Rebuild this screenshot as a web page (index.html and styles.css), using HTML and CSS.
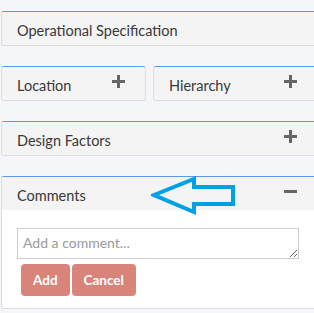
FILE: index.html
```html
<!DOCTYPE html>
<html lang="en">
<head>
    <meta charset="UTF-8">
    <title>Specification</title>
    <link rel="stylesheet" href="styles.css">
</head>
<body>
    <div class="page">
        <div class="panel">
            <div class="panel-heading">Operational Specification</div>
        </div>

        <div class="panel-row">
            <div class="panel">
                <div class="panel-heading">Location <span class="icon plus"></span></div>
            </div>
            <div class="panel">
                <div class="panel-heading">Hierarchy <span class="icon plus"></span></div>
            </div>
        </div>

        <div class="panel">
            <div class="panel-heading">Design Factors <span class="icon plus"></span></div>
        </div>

        <div class="panel comments">
            <div class="panel-heading">Comments <span class="icon minus"></span></div>
            <div class="panel-body">
                <textarea placeholder="Add a comment..."></textarea>
                <div class="actions">
                    <button>Add</button>
                    <button>Cancel</button>
                </div>
            </div>
            <svg class="pointer" width="90" height="42" viewBox="0 0 90 42">
                <polygon points="3,19 43,3 43,11 82,11 82,28 43,28 43,36" fill="none" stroke="#00a0e6" stroke-width="4" stroke-linejoin="miter"/>
            </svg>
        </div>
    </div>
</body>
</html>
```

FILE: styles.css
```css
body {
    margin: 0;
    background-color: #f5f6fa;
    font-family: Lato, "Liberation Sans", sans-serif;
    color: #383838;
    overflow: hidden;
}

.page {
    width: 317px;
    margin: 11px 0 0 1px;
}

.panel {
    position: relative;
    border: 1px solid #dddddd;
    border-top: 1px solid #5b9be6;
    border-radius: 3px;
    margin-bottom: 20px;
    background: white;
}

.panel-row {
    display: grid;
    grid-template-columns: 145px 1fr;
    gap: 7px;
}

.panel-heading {
    display: flex;
    align-items: center;
    justify-content: space-between;
    box-sizing: border-box;
    height: 33px;
    padding: 3px 20px 0 15px;
    background-color: #f4f4f4;
    font-size: 14.5px;
    border-radius: 3px;
}

.comments .panel-heading {
    border-radius: 3px 3px 0 0;
}

.icon {
    position: relative;
    width: 13px;
    height: 13px;
    margin-top: -8px;
}

.plus::before,
.plus::after,
.minus::before {
    content: "";
    position: absolute;
    background: #666;
}

.plus::before,
.minus::before {
    left: 0;
    top: 5px;
    width: 13px;
    height: 3px;
}

.plus::after {
    left: 5px;
    top: 0;
    width: 3px;
    height: 13px;
}

.panel-body {
    padding: 18px 15px 12px 15px;
}

textarea {
    display: block;
    box-sizing: border-box;
    width: 282px;
    height: 31px;
    border: 1px solid #cccccc;
    padding: 5px 5px;
    font-family: inherit;
    font-size: 14px;
    color: #555;
}

textarea::placeholder {
    color: #999;
}

.actions {
    display: flex;
    gap: 2px;
    margin: 5px 0 0 4px;
}

button {
    background-color: #d9847b;
    color: white;
    border: none;
    height: 32px;
    padding: 0 12px;
    border-radius: 4px;
    font-family: inherit;
    font-weight: bold;
    font-size: 13.5px;
}

.pointer {
    position: absolute;
    left: 149px;
    top: -1px;
}
```
